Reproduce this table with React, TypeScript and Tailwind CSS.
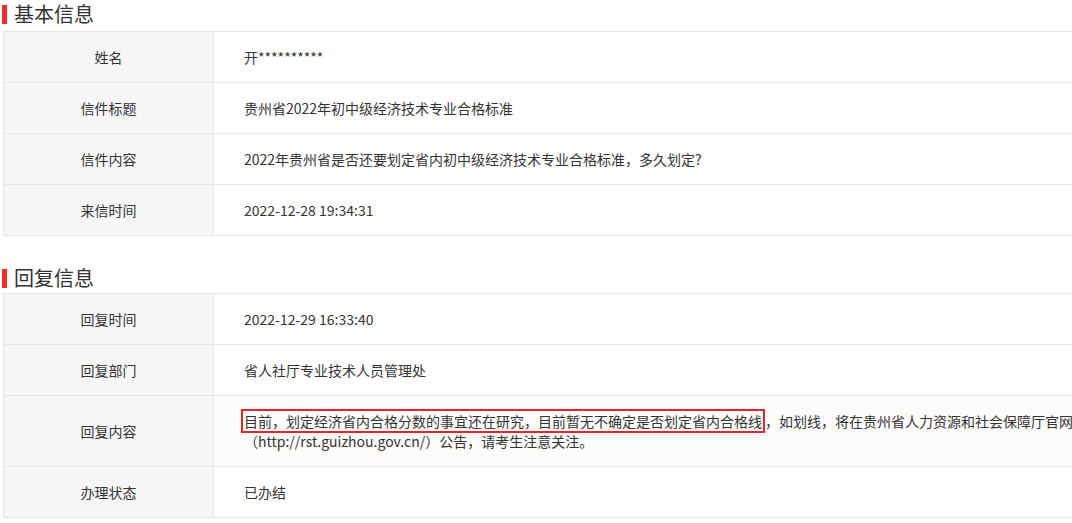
import React from "react";

const font = { fontFamily: '"Microsoft YaHei", "Noto Sans CJK SC", "Noto Sans", sans-serif' };

function Title({ text }: { text: string }) {
  return (
    <div className="flex items-center h-[31px] pl-[2px]">
      <div className="w-[5px] h-[19px] bg-[#ee2e2e] mt-[-3px]" />
      <div className="ml-[7px] text-[20px] leading-[26px] text-[#333] mt-[-3px]">{text}</div>
    </div>
  );
}

function Row({ label, children, tall, tint }: { label: string; children: React.ReactNode; tall?: boolean; tint?: boolean }) {
  return (
    <div className={`flex border-b border-[#e6e6e6] ${tall ? "h-[71px]" : "h-[51px]"}`}>
      <div className="w-[210px] shrink-0 bg-[#f6f6f6] border-r border-[#e6e6e6] flex items-center justify-center text-[14px] text-[#333]">
        {label}
      </div>
      <div className={`flex-1 flex items-center pl-[30px] text-[14px] text-[#333] ${tint ? "bg-[#fdfcfb]" : "bg-white"}`}>
        {children}
      </div>
    </div>
  );
}

export default function App() {
  return (
    <div className="w-[1072px] h-[523px] overflow-hidden bg-white" style={font}>
      <Title text="基本信息" />
      <div className="ml-[3px] w-[1200px] border-t border-l border-[#e6e6e6]">
        <Row label="姓名">开**********</Row>
        <Row label="信件标题">贵州省2022年初中级经济技术专业合格标准</Row>
        <Row label="信件内容">2022年贵州省是否还要划定省内初中级经济技术专业合格标准，多久划定?</Row>
        <Row label="来信时间">2022-12-28 19:34:31</Row>
      </div>
      <div className="h-[28px]" />
      <Title text="回复信息" />
      <div className="ml-[3px] w-[1200px] mt-[-2px] border-t border-l border-[#e6e6e6]">
        <Row label="回复时间">2022-12-29 16:33:40</Row>
        <Row label="回复部门">省人社厅专业技术人员管理处</Row>
        <Row label="回复内容" tall tint>
          <div className="leading-[20px] whitespace-nowrap">
            <div>
              <span className="border-2 border-[#e3262b] ml-[-3px] px-[1px]">目前，划定经济省内合格分数的事宜还在研究，目前暂无不确定是否划定省内合格线</span>
              ，如划线，将在贵州省人力资源和社会保障厅官网
            </div>
            <div>（http://rst.guizhou.gov.cn/）公告，请考生注意关注。</div>
          </div>
        </Row>
        <Row label="办理状态">已办结</Row>
      </div>
    </div>
  );
}
